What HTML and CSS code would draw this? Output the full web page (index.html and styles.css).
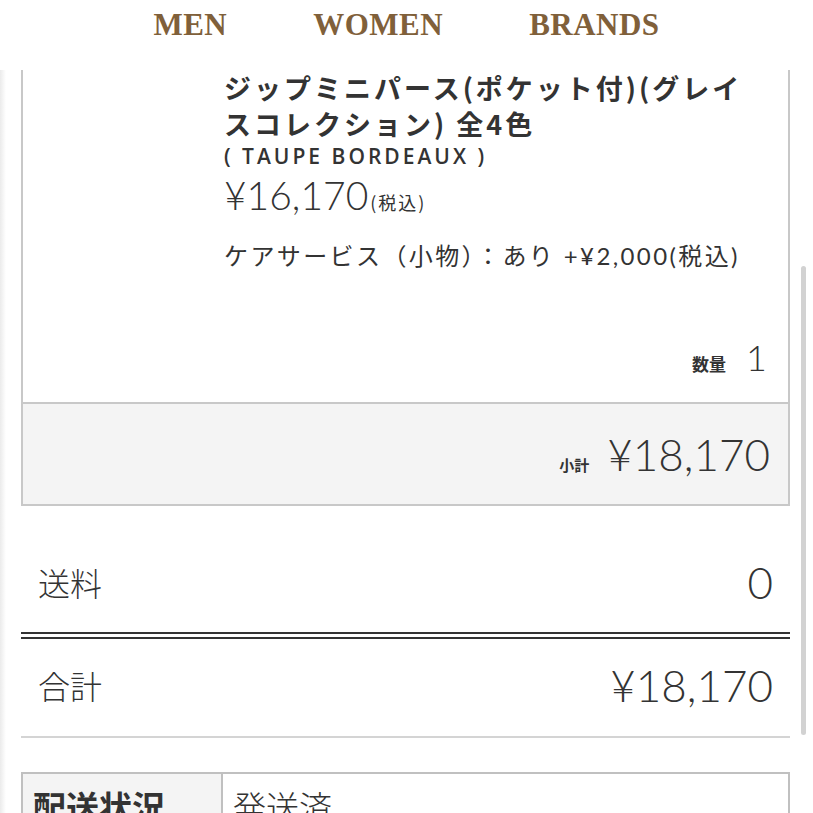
FILE: index.html
```html
<!DOCTYPE html>
<html lang="ja">
<head>
    <meta charset="UTF-8">
    <meta name="viewport" content="width=device-width, initial-scale=1.0">
    <title>ご注文内容</title>
    <link rel="stylesheet" href="styles.css">
</head>
<body>

    <header class="site-header">
        <nav class="gnav">
            <a href="#" class="gnav-item">MEN</a>
            <a href="#" class="gnav-item">WOMEN</a>
            <a href="#" class="gnav-item">BRANDS</a>
        </nav>
    </header>

    <main class="page">
        <!-- 商品 -->
        <section class="cart-item">
            <div class="item-body">
                <div class="item-thumb"></div>
                <div class="item-info">
                    <h2 class="item-name">ジップミニパース(ポケット付)(グレイスコレクション) 全4色</h2>
                    <p class="item-color">( TAUPE BORDEAUX )</p>
                    <p class="item-price">¥16,170<span class="tax">(税込)</span></p>
                    <p class="item-option">ケアサービス（小物）：あり +¥2,000(税込)</p>
                    <p class="item-qty"><span class="qty-label">数量</span><span class="qty-num">1</span></p>
                </div>
            </div>
            <div class="item-subtotal">
                <span class="subtotal-label">小計</span>
                <span class="subtotal-price">¥18,170</span>
            </div>
        </section>

        <!-- 合計 -->
        <div class="summary">
            <div class="summary-row">
                <span class="summary-label">送料</span>
                <span class="summary-value">0</span>
            </div>
            <div class="summary-row total">
                <span class="summary-label">合計</span>
                <span class="summary-value">¥18,170</span>
            </div>
        </div>

        <!-- 配送 -->
        <table class="order-info">
            <tr>
                <th>配送状況</th>
                <td>発送済</td>
            </tr>
        </table>
    </main>

    <div class="scrollbar"></div>

</body>
</html>
```

FILE: styles.css
```css
body {
    margin: 0;
    font-family: "Noto Sans CJK JP", sans-serif;
    color: #333;
    background-color: #fff;
    overflow: hidden;
    height: 813px;
    position: relative;
}
p {
    margin: 0;
}
/* ヘッダー */
.site-header {
    height: 70px;
    background-color: #fff;
}
.gnav {
    display: flex;
    justify-content: center;
    gap: 86px;
    padding-top: 9px;
}
.gnav-item {
    font-family: "Liberation Serif", serif;
    font-weight: bold;
    font-size: 31px;
    line-height: 1;
    letter-spacing: 0.5px;
    color: #80603a;
    text-decoration: none;
}
/* ページ */
.page {
    padding: 0 23px 0 21px;
    background: linear-gradient(to right, #ebebeb, #fff 6px);
}
.cart-item {
    border: 2px solid #c8c8c8;
    border-top: none;
}
.item-body {
    display: flex;
    padding-right: 23px;
}
.item-thumb {
    width: 201px;
    flex-shrink: 0;
}
.item-info {
    flex: 1;
    padding-bottom: 25px;
}
.item-name {
    margin: 0;
    font-size: 27px;
    line-height: 36px;
    font-weight: bold;
    letter-spacing: 3px;
    color: #333;
}
.item-color {
    font-family: "Open Sans", "Noto Sans CJK JP", sans-serif;
    font-weight: 600;
    font-size: 21px;
    line-height: 28px;
    letter-spacing: 3px;
}
.item-price {
    font-family: Lato, "Noto Sans CJK JP", sans-serif;
    font-weight: 300;
    font-size: 39px;
    line-height: 46px;
    margin-top: 2px;
}
.tax {
    font-family: "Noto Sans CJK JP", sans-serif;
    font-size: 18px;
    font-weight: normal;
    letter-spacing: 2px;
    margin-left: 2px;
}
.item-option {
    font-family: Lato, "Noto Sans CJK JP", sans-serif;
    font-size: 24px;
    line-height: 30px;
    margin-top: 16px;
    letter-spacing: 2.4px;
}
.item-qty {
    display: flex;
    justify-content: flex-end;
    align-items: baseline;
    gap: 20px;
    margin-top: 66px;
}
.qty-label {
    font-size: 17px;
    font-weight: bold;
}
.qty-num {
    font-family: Lato, sans-serif;
    font-weight: 300;
    font-size: 36px;
    line-height: 40px;
    margin-right: -2px;
}
.item-subtotal {
    display: flex;
    justify-content: flex-end;
    align-items: baseline;
    gap: 18px;
    padding: 26px 18px 26px 0;
    background-color: #f4f4f4;
    border-top: 2px solid #c8c8c8;
}
.subtotal-label {
    font-size: 15px;
    font-weight: bold;
}
.subtotal-price {
    font-family: Lato, sans-serif;
    font-weight: 300;
    font-size: 44px;
    line-height: 48px;
}
/* 合計 */
.summary {
    margin-top: 36px;
}
.summary-row {
    display: flex;
    justify-content: space-between;
    align-items: center;
    padding: 0 17px 10px;
    height: 80px;
    font-family: Lato, "Noto Sans CJK JP", sans-serif;
    font-weight: 300;
    border-bottom: 7px double #333;
}
.summary-row.total {
    height: 91px;
    padding-bottom: 6px;
    border-bottom: 2px solid #d4d4d4;
}
.summary-label {
    font-family: "Noto Sans CJK JP", sans-serif;
    font-size: 32px;
    font-weight: 300;
}
.summary-value {
    font-size: 44px;
}
/* 配送 */
.order-info {
    width: 100%;
    margin-top: 34px;
    border-collapse: collapse;
    font-size: 33px;
}
.order-info th,
.order-info td {
    border: 2px solid #c0c0c0;
    padding: 8px 10px;
    text-align: left;
    vertical-align: top;
}
.order-info th {
    width: 178px;
    background-color: #f4f4f4;
    font-weight: bold;
}
.order-info td {
    font-weight: 300;
}
/* スクロールバー */
.scrollbar {
    position: absolute;
    top: 266px;
    left: 801px;
    width: 5px;
    height: 469px;
    border-radius: 3px;
    background-color: #d2d2d2;
}
```
